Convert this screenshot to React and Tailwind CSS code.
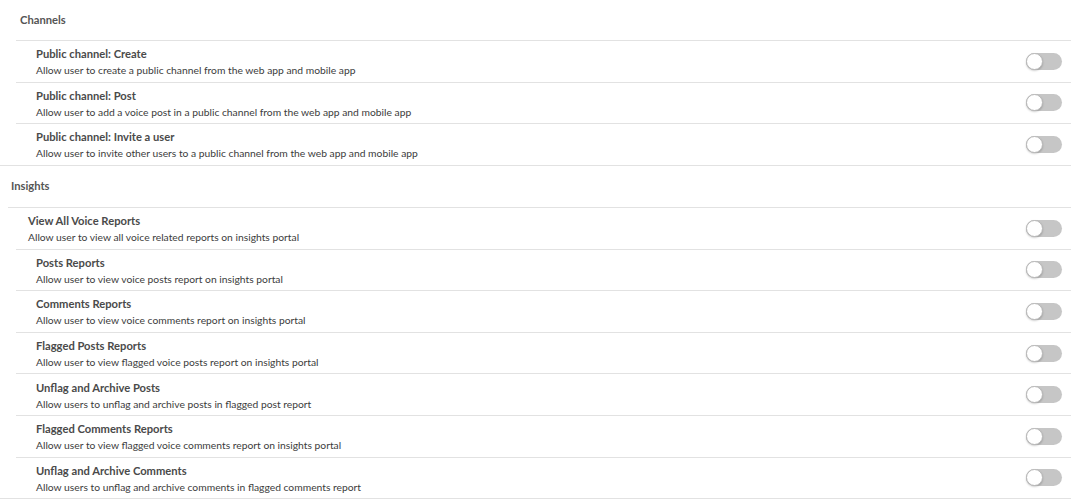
import React from 'react';

const CHANNELS = [
  { title: 'Public channel: Create', desc: 'Allow user to create a public channel from the web app and mobile app' },
  { title: 'Public channel: Post', desc: 'Allow user to add a voice post in a public channel from the web app and mobile app' },
  { title: 'Public channel: Invite a user', desc: 'Allow user to invite other users to a public channel from the web app and mobile app' },
];

const INSIGHTS = [
  { title: 'Posts Reports', desc: 'Allow user to view voice posts report on insights portal' },
  { title: 'Comments Reports', desc: 'Allow user to view voice comments report on insights portal' },
  { title: 'Flagged Posts Reports', desc: 'Allow user to view flagged voice posts report on insights portal' },
  { title: 'Unflag and Archive Posts', desc: 'Allow users to unflag and archive posts in flagged post report' },
  { title: 'Flagged Comments Reports', desc: 'Allow user to view flagged voice comments report on insights portal' },
  { title: 'Unflag and Archive Comments', desc: 'Allow users to unflag and archive comments in flagged comments report' },
];

function Toggle() {
  return (
    <div className="relative w-[36px] h-[17px] rounded-full bg-[#c6c6c6] mr-[9px] shrink-0">
      <div className="absolute left-0 top-0 w-[17px] h-[17px] rounded-full bg-white border border-[#b8b8b8] shadow-[0_1px_2px_rgba(0,0,0,0.2)]" />
    </div>
  );
}

function Row({ title, desc, first }) {
  return (
    <div className={`flex items-center pl-[20px] ${first ? 'h-[40.6px]' : 'h-[41.6px] border-t border-[#e2e2e2]'}`}>
      <div className="flex-1 flex flex-col leading-[16px] pt-[2px]">
        <span className="text-[11.2px] font-bold text-[#4a4a4a]">{title}</span>
        <span className="text-[10.3px] text-[#3c3c3c]">{desc}</span>
      </div>
      <Toggle />
    </div>
  );
}

export default function App() {
  return (
    <div className="w-[1071px] h-[499px] bg-white overflow-hidden" style={{ fontFamily: 'Lato, "Noto Sans", sans-serif' }}>
      {/* Channels */}
      <div className="border-b border-[#e2e2e2]">
        <div className="h-[40px] flex items-center pl-[20px] text-[11.2px] font-bold text-[#555555]">Channels</div>
        <div className="ml-[16px] border-t border-[#e2e2e2]">
          {CHANNELS.map((r, i) => (
            <Row key={i} {...r} first={i === 0} />
          ))}
        </div>
      </div>

      {/* Insights */}
      <div className="border-b border-[#e2e2e2]">
        <div className="h-[41.2px] flex items-center pl-[11px] text-[11.2px] font-bold text-[#555555]">Insights</div>
        <div className="ml-[8px] border-t border-[#e2e2e2]">
          <Row title="View All Voice Reports" desc="Allow user to view all voice related reports on insights portal" first />
          <div className="ml-[8px] border-t border-[#e2e2e2]">
            {INSIGHTS.map((r, i) => (
              <Row key={i} {...r} first={i === 0} />
            ))}
          </div>
        </div>
      </div>
    </div>
  );
}
